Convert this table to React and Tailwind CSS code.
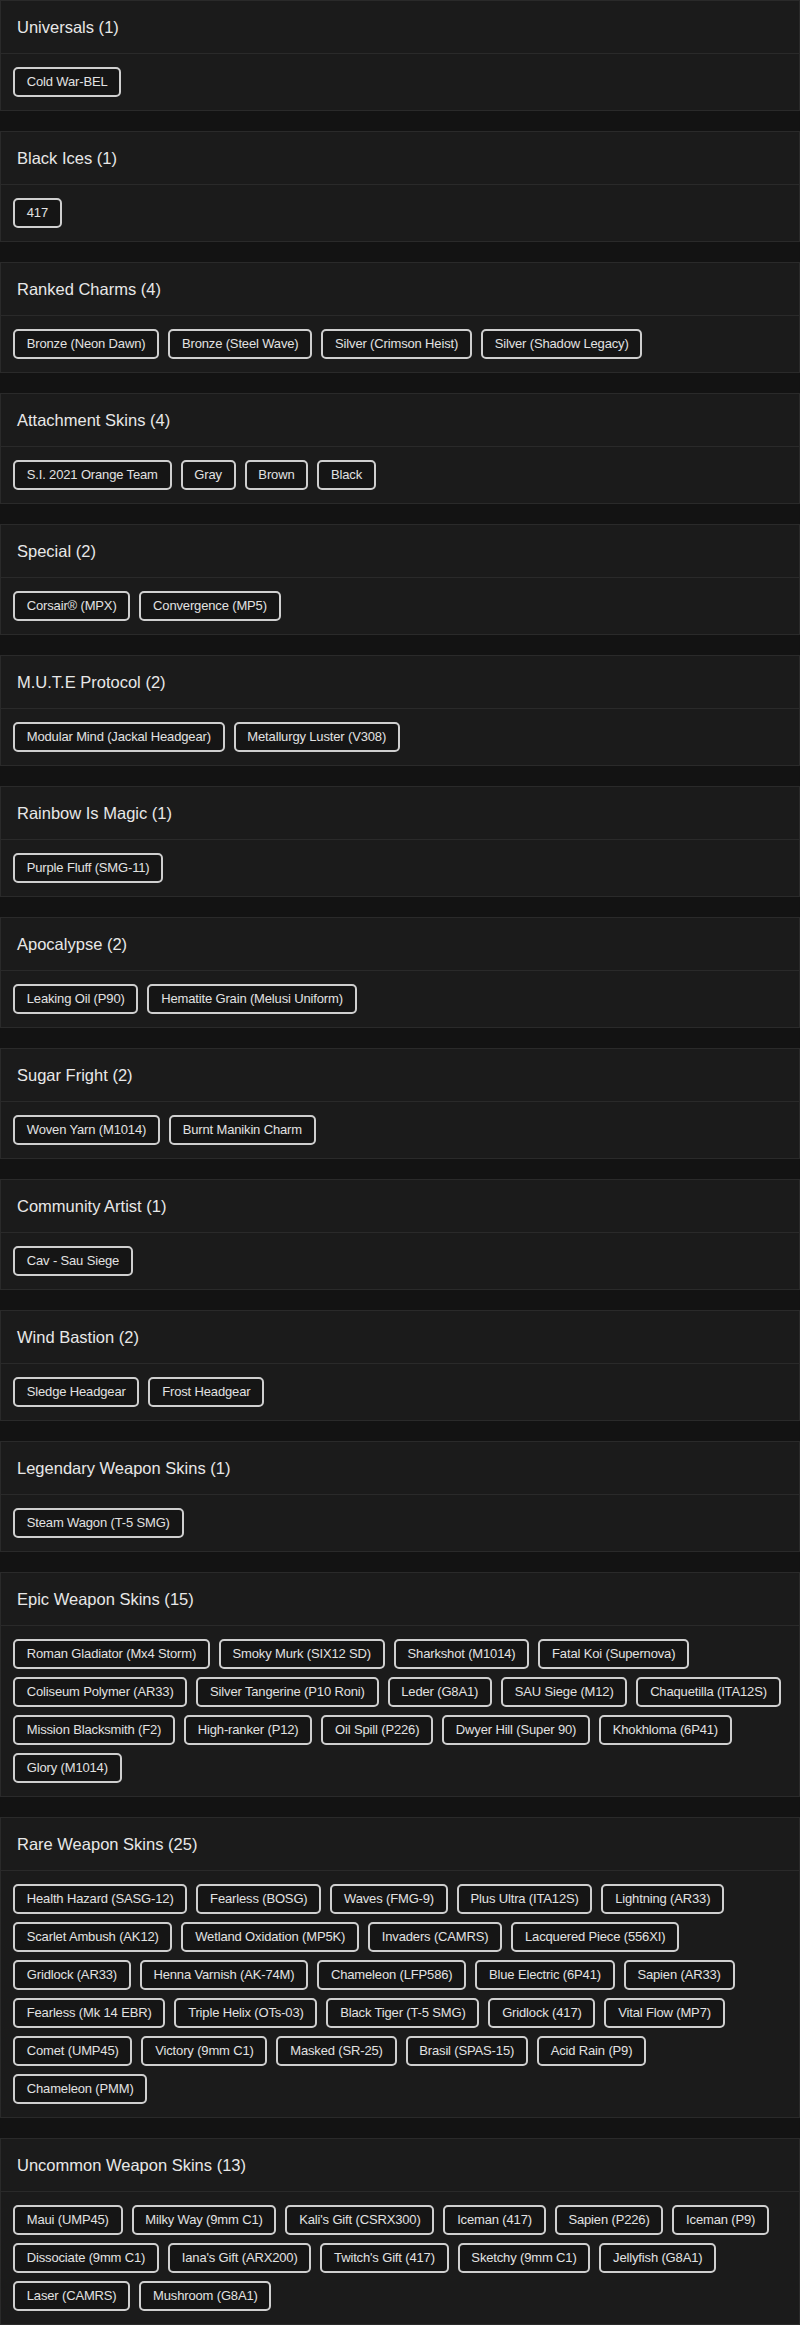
import React from "react";

const groups = [
  { title: "Universals", items: ["Cold War-BEL"] },
  { title: "Black Ices", items: ["417"] },
  {
    title: "Ranked Charms",
    items: ["Bronze (Neon Dawn)", "Bronze (Steel Wave)", "Silver (Crimson Heist)", "Silver (Shadow Legacy)"],
  },
  { title: "Attachment Skins", items: ["S.I. 2021 Orange Team", "Gray", "Brown", "Black"] },
  { title: "Special", items: ["Corsair® (MPX)", "Convergence (MP5)"] },
  { title: "M.U.T.E Protocol", items: ["Modular Mind (Jackal Headgear)", "Metallurgy Luster (V308)"] },
  { title: "Rainbow Is Magic", items: ["Purple Fluff (SMG-11)"] },
  { title: "Apocalypse", items: ["Leaking Oil (P90)", "Hematite Grain (Melusi Uniform)"] },
  { title: "Sugar Fright", items: ["Woven Yarn (M1014)", "Burnt Manikin Charm"] },
  { title: "Community Artist", items: ["Cav - Sau Siege"] },
  { title: "Wind Bastion", items: ["Sledge Headgear", "Frost Headgear"] },
  { title: "Legendary Weapon Skins", items: ["Steam Wagon (T-5 SMG)"] },
  {
    title: "Epic Weapon Skins",
    items: [
      "Roman Gladiator (Mx4 Storm)",
      "Smoky Murk (SIX12 SD)",
      "Sharkshot (M1014)",
      "Fatal Koi (Supernova)",
      "Coliseum Polymer (AR33)",
      "Silver Tangerine (P10 Roni)",
      "Leder (G8A1)",
      "SAU Siege (M12)",
      "Chaquetilla (ITA12S)",
      "Mission Blacksmith (F2)",
      "High-ranker (P12)",
      "Oil Spill (P226)",
      "Dwyer Hill (Super 90)",
      "Khokhloma (6P41)",
      "Glory (M1014)",
    ],
  },
  {
    title: "Rare Weapon Skins",
    items: [
      "Health Hazard (SASG-12)",
      "Fearless (BOSG)",
      "Waves (FMG-9)",
      "Plus Ultra (ITA12S)",
      "Lightning (AR33)",
      "Scarlet Ambush (AK12)",
      "Wetland Oxidation (MP5K)",
      "Invaders (CAMRS)",
      "Lacquered Piece (556XI)",
      "Gridlock (AR33)",
      "Henna Varnish (AK-74M)",
      "Chameleon (LFP586)",
      "Blue Electric (6P41)",
      "Sapien (AR33)",
      "Fearless (Mk 14 EBR)",
      "Triple Helix (OTs-03)",
      "Black Tiger (T-5 SMG)",
      "Gridlock (417)",
      "Vital Flow (MP7)",
      "Comet (UMP45)",
      "Victory (9mm C1)",
      "Masked (SR-25)",
      "Brasil (SPAS-15)",
      "Acid Rain (P9)",
      "Chameleon (PMM)",
    ],
  },
  {
    title: "Uncommon Weapon Skins",
    items: [
      "Maui (UMP45)",
      "Milky Way (9mm C1)",
      "Kali's Gift (CSRX300)",
      "Iceman (417)",
      "Sapien (P226)",
      "Iceman (P9)",
      "Dissociate (9mm C1)",
      "Iana's Gift (ARX200)",
      "Twitch's Gift (417)",
      "Sketchy (9mm C1)",
      "Jellyfish (G8A1)",
      "Laser (CAMRS)",
      "Mushroom (G8A1)",
    ],
  },
];

const Card = ({ title, items }) => (
  <div className="border border-[#2a2a2a] bg-[#1b1b1b]">
    {/* header */}
    <div className="h-[53px] flex items-center px-4 border-b border-[#2a2a2a]">
      <h2 className="text-[16.5px] text-[#e8e8e8] leading-none">
        {title} ({items.length})
      </h2>
    </div>
    {/* tags */}
    <div className="flex flex-wrap gap-x-[9px] gap-y-2 px-3 py-[13px]">
      {items.map((item) => (
        <span
          key={item}
          className="h-[30px] flex items-center px-[11.75px] border-2 border-[#cfcfcf] rounded-[5px] bg-[#151515] text-[13px] tracking-[-0.15px] text-[#e2e2e2] whitespace-nowrap"
        >
          {item}
        </span>
      ))}
    </div>
  </div>
);

export default function App() {
  return (
    <div
      className="min-h-screen bg-[#131313] flex flex-col gap-5"
      style={{ fontFamily: '"Liberation Sans", Arial, sans-serif' }}
    >
      {groups.map((g) => (
        <Card key={g.title} title={g.title} items={g.items} />
      ))}
    </div>
  );
}
